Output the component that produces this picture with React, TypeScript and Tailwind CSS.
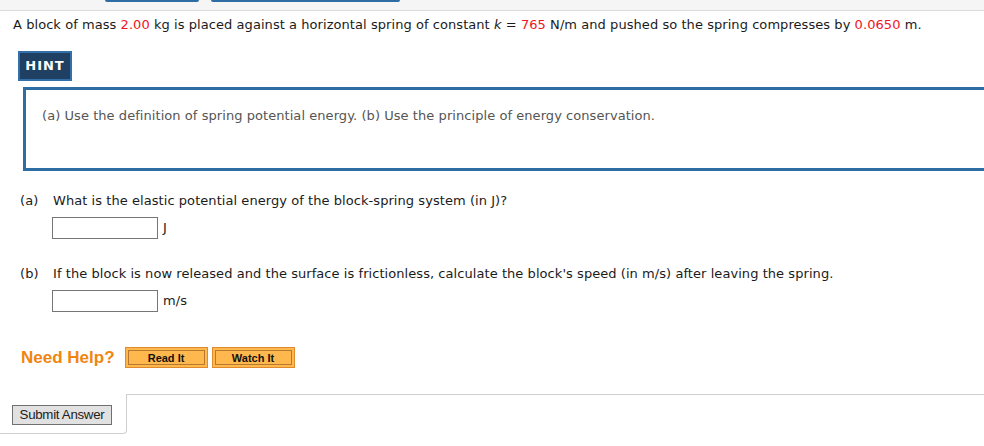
const font = "font-['DejaVu_Sans','Verdana',sans-serif]";

function Val({ children }: { children: React.ReactNode }) {
  return <span className="text-[#f0141e]">{children}</span>;
}

function OrangeButton({ label }: { label: string }) {
  return (
    <div className="h-[21px] w-[83px] border border-[#e08a2c] bg-[#ffb84d] p-[2px]">
      <div className="flex h-full items-center justify-center border border-[#b8782e] font-['Liberation_Sans',Arial,sans-serif] text-[11px] font-bold tracking-normal text-[#111]">
        {label}
      </div>
    </div>
  );
}

function AnswerRow({ unit }: { unit: string }) {
  return (
    <div className="mt-[7px] flex items-center pl-[52px]">
      <div className="h-[22px] w-[106px] border border-[#767676] bg-white" />
      <span className="ml-[5px] text-[13px] text-[#222]">{unit}</span>
    </div>
  );
}

export default function App() {
  return (
    <div className={`h-[446px] w-[984px] overflow-hidden bg-white ${font} text-[13px] tracking-[0.06px] text-[#1b1b1b]`}>
      {/* top strip */}
      <div className="relative h-[11px] border-b border-[#dcdcdc] bg-[#f5f5f5]">
        <div className="absolute left-[105px] top-0 h-[2px] w-[94px] rounded-b-sm bg-[#2e6da4]" />
        <div className="absolute left-[211px] top-0 h-[2px] w-[189px] rounded-b-sm bg-[#2e6da4]" />
      </div>

      <p className="ml-[13px] mt-[5px] leading-[18px]">
        A block of mass <Val>2.00</Val> kg is placed against a horizontal spring of constant <i>k</i> ={" "}
        <Val>765</Val> N/m and pushed so the spring compresses by <Val>0.0650</Val> m.
      </p>

      {/* hint */}
      <div className="ml-[18px] mt-[17px] flex h-[30px] w-[54px] items-center justify-center border-2 border-[#336fa8] bg-[#1f3f63] text-[13px] font-bold tracking-[1px] text-white">
        HINT
      </div>
      <div className="ml-[23px] mt-[6px] h-[84px] w-[980px] border-[3px] border-[#2e6da4] pl-[16px] pt-[17px] text-[13px] leading-[18px] text-[#555]">
        (a) Use the definition of spring potential energy. (b) Use the principle of energy conservation.
      </div>

      {/* part a */}
      <div className="mt-[21px] flex leading-[18px]">
        <span className="w-[53px] pl-[20px]">(a)</span>
        <span>What is the elastic potential energy of the block-spring system (in J)?</span>
      </div>
      <AnswerRow unit="J" />

      {/* part b */}
      <div className="mt-[26px] flex leading-[18px]">
        <span className="w-[53px] pl-[20px]">(b)</span>
        <span>
          If the block is now released and the surface is frictionless, calculate the block's speed (in m/s) after
          leaving the spring.
        </span>
      </div>
      <AnswerRow unit="m/s" />

      {/* need help */}
      <div className="ml-[21px] mt-[33px] flex items-center">
        <span className="mr-[10px] font-['Liberation_Sans',Arial,sans-serif] text-[17px] font-bold tracking-normal text-[#f0850f]">
          Need Help?
        </span>
        <OrangeButton label="Read It" />
        <div className="w-[4px]" />
        <OrangeButton label="Watch It" />
      </div>

      {/* submit tab */}
      <div className="mt-[23px] flex">
        <div className="h-[40px] w-[127px] rounded-br border-b border-r border-[#cfcfcf] pl-[12px] pt-[11px]">
          <div className="flex h-[20px] w-[100px] items-center justify-center border border-[#707070] bg-[#e1e1e1] font-['Liberation_Sans',Arial,sans-serif] text-[13.3px] tracking-[-0.3px] text-[#222]">
            Submit Answer
          </div>
        </div>
        <div className="flex-1 border-t border-[#cfcfcf]" />
      </div>
    </div>
  );
}
